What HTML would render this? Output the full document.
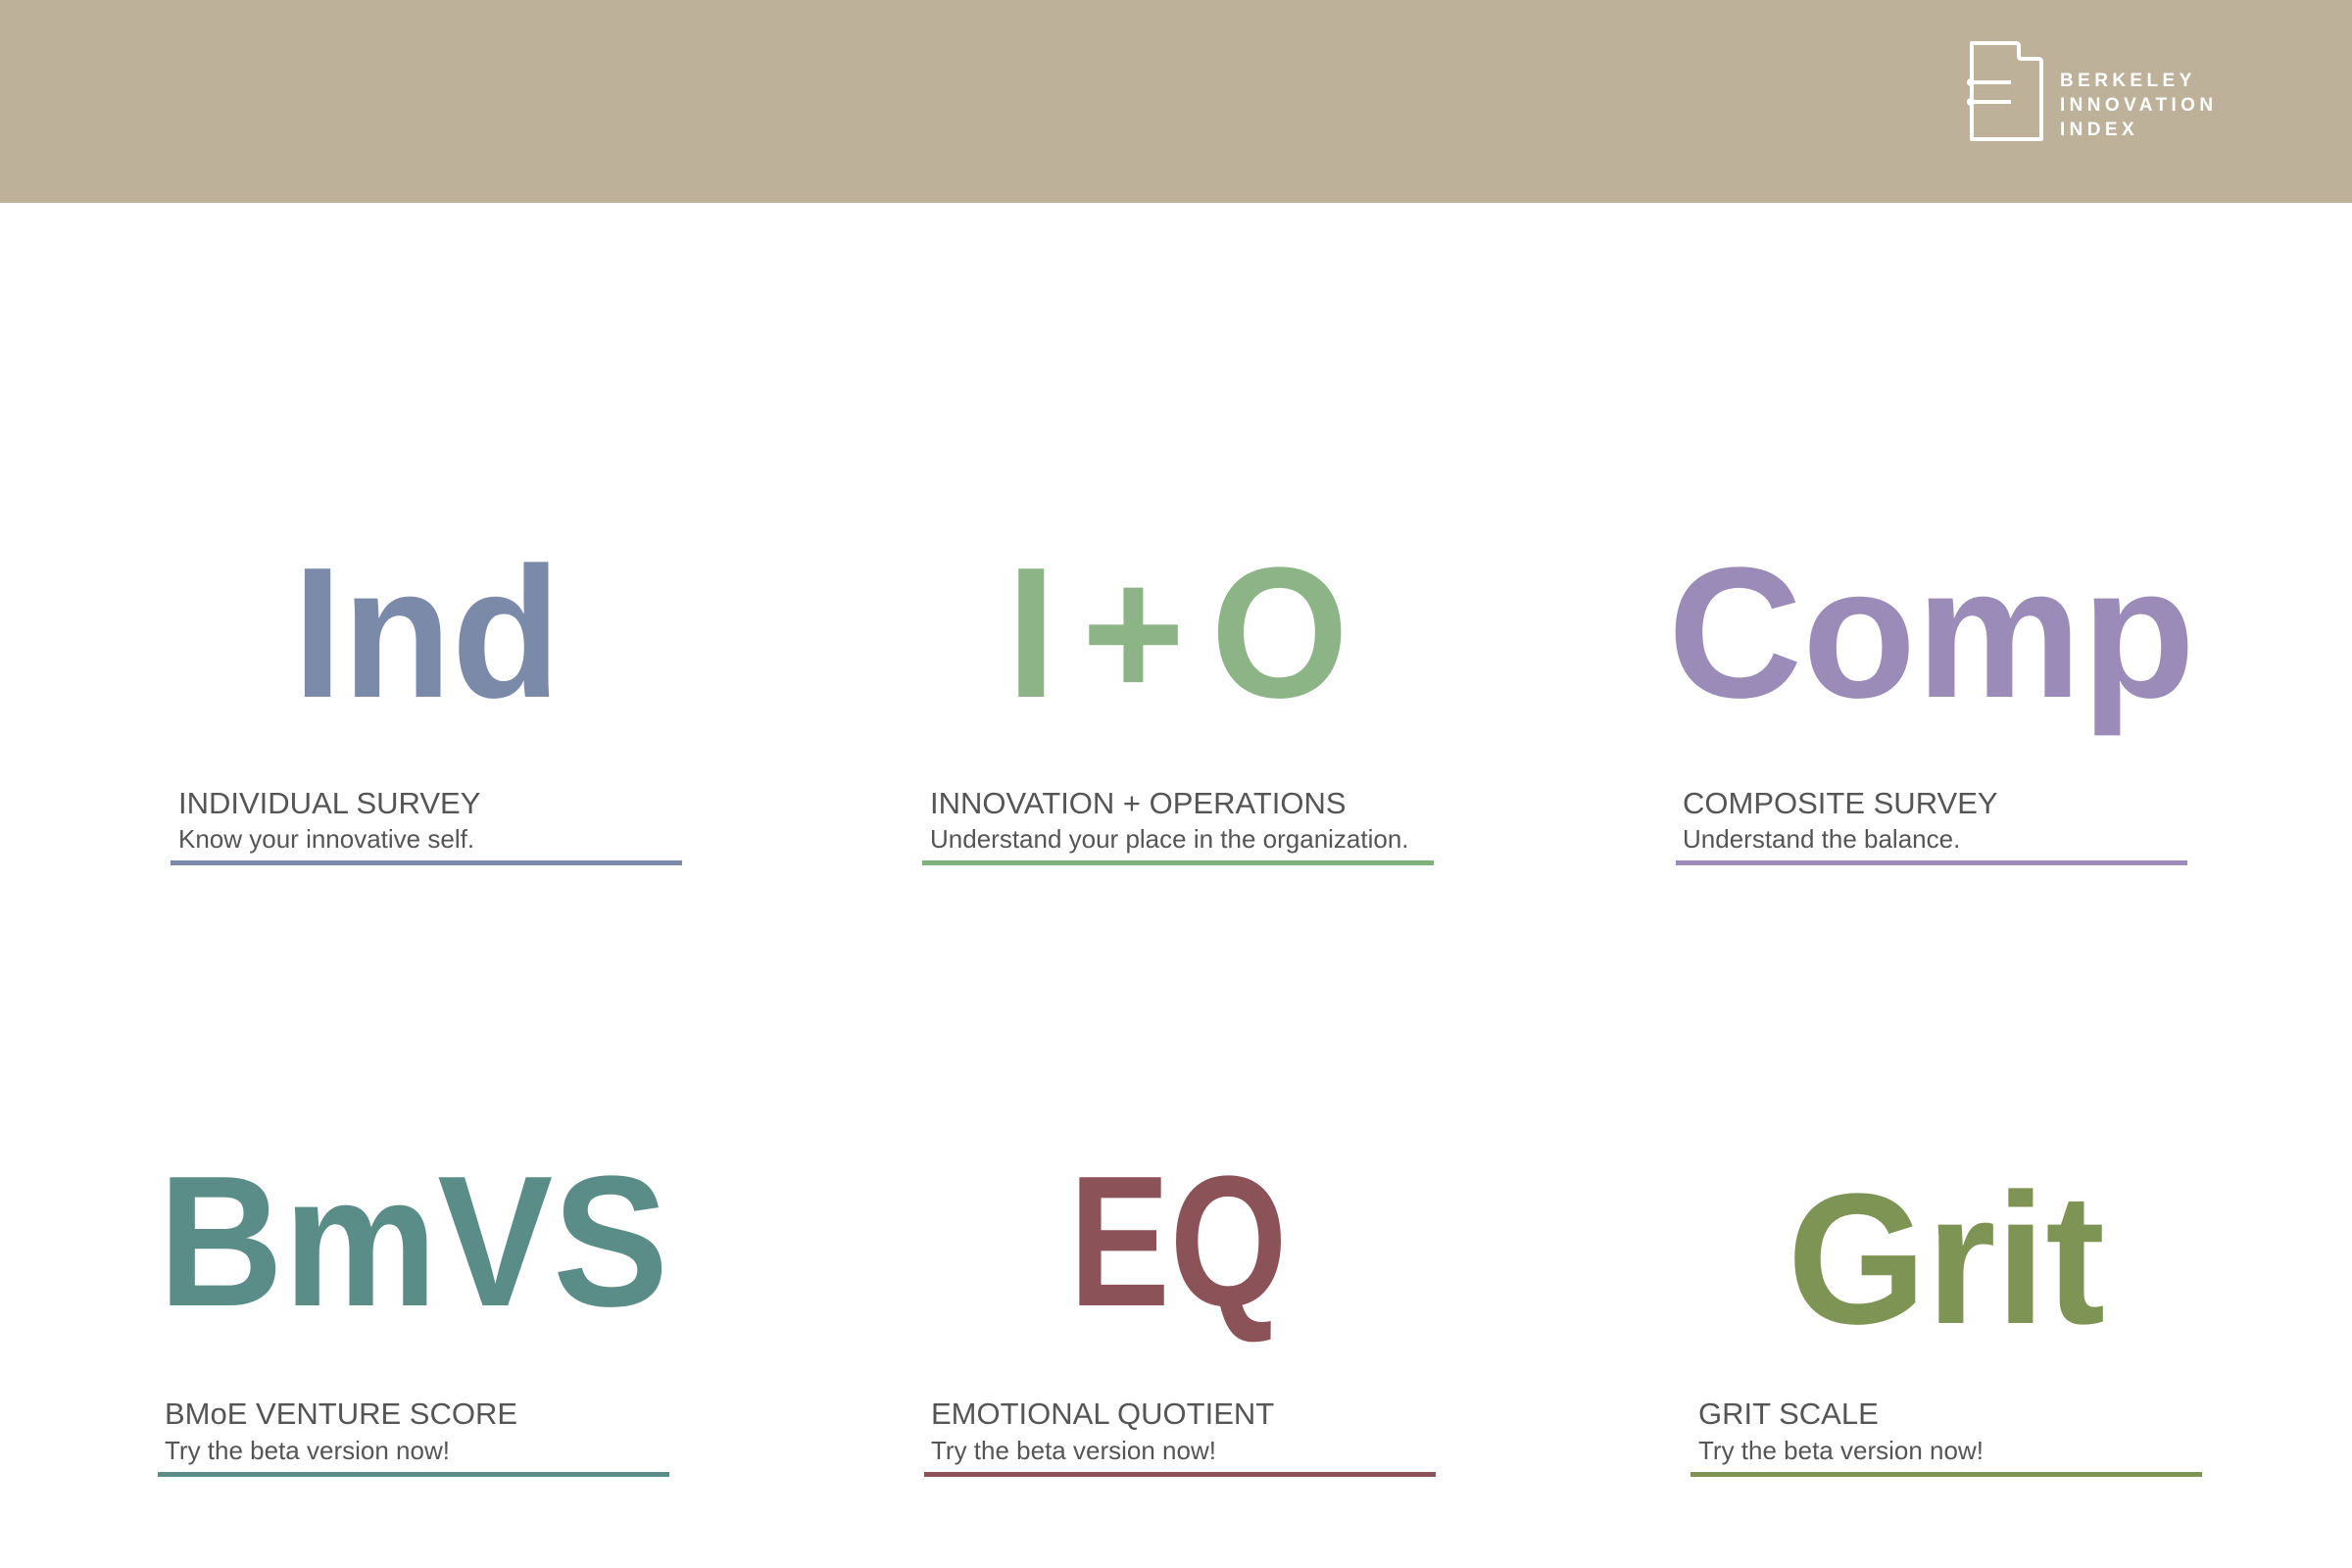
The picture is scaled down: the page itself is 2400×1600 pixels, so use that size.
<!DOCTYPE html>
<html><head><meta charset="utf-8"><style>
*{margin:0;padding:0}
body{width:2400px;height:1600px;background:#fff;position:relative;overflow:hidden;font-family:"Liberation Sans",sans-serif}
.hdr{position:absolute;left:0;top:0;width:2400px;height:207px;background:#bdb19a}
.logo{position:absolute;left:2102px;top:70px;color:#fff;font-weight:bold;font-size:19px;line-height:25px;letter-spacing:4.4px}
.big{position:absolute;width:800px;text-align:center;font-weight:bold;font-size:190px;line-height:190px;white-space:pre}
.big span{display:inline-block}
.h{position:absolute;font-size:31px;line-height:32px;color:#555;white-space:nowrap}
.s{position:absolute;font-size:26px;line-height:25px;color:#555;white-space:nowrap}
.ln{position:absolute;height:5px}
</style></head><body>
<div class="hdr"></div>
<svg style="position:absolute;left:0;top:0" width="2400" height="207">
<g fill="none" stroke="#fff" stroke-width="4" stroke-linejoin="round">
<path d="M2012 44 H2057 Q2060 44 2060 47 V57 Q2060 60 2063 60 H2080 Q2083 60 2083 63 V142 H2012 Z"/>
<path d="M2011 84 H2052 M2011 104 H2052"/>
</g>
<circle cx="2011" cy="84" r="4" fill="#fff"/><circle cx="2011" cy="104" r="4" fill="#fff"/>
</svg>
<div class="logo">BERKELEY<br>INNOVATION<br>INDEX</div>

<div class="big" style="left:35px;top:551px;color:#7b8aa8"><span style="transform:scaleX(.96)">Ind</span></div>
<div class="big" style="left:802px;top:551px;color:#8db486"><span style="transform:scaleX(.95);word-spacing:-25px">I + O</span></div>
<div class="big" style="left:1571px;top:551px;color:#9a8bb8"><span style="transform:scaleX(1)">Comp</span></div>

<div class="big" style="left:22px;top:1172px;color:#5a8d87"><span style="transform:scaleX(.93)">BmVS</span></div>
<div class="big" style="left:802px;top:1172px;color:#8b5257"><span style="transform:scaleX(.81)">EQ</span></div>
<div class="big" style="left:1586px;top:1190px;color:#7d9455"><span style="transform:scaleX(.96)">Grit</span></div>

<div class="h" style="left:182px;top:804px">INDIVIDUAL SURVEY</div>
<div class="s" style="left:182px;top:844px">Know your innovative self.</div>
<div class="ln" style="left:174px;top:878px;width:522px;background:#7b8aa8"></div>

<div class="h" style="left:949px;top:804px">INNOVATION + OPERATIONS</div>
<div class="s" style="left:949px;top:844px">Understand your place in the organization.</div>
<div class="ln" style="left:941px;top:878px;width:522px;background:#7fb27a"></div>

<div class="h" style="left:1717px;top:804px">COMPOSITE SURVEY</div>
<div class="s" style="left:1717px;top:844px">Understand the balance.</div>
<div class="ln" style="left:1710px;top:878px;width:522px;background:#9a8bb8"></div>

<div class="h" style="left:168px;top:1427px">BMoE VENTURE SCORE</div>
<div class="s" style="left:168px;top:1468px">Try the beta version now!</div>
<div class="ln" style="left:161px;top:1502px;width:522px;background:#5a8d87"></div>

<div class="h" style="left:950px;top:1427px">EMOTIONAL QUOTIENT</div>
<div class="s" style="left:950px;top:1468px">Try the beta version now!</div>
<div class="ln" style="left:943px;top:1502px;width:522px;background:#8b5257"></div>

<div class="h" style="left:1733px;top:1427px">GRIT SCALE</div>
<div class="s" style="left:1733px;top:1468px">Try the beta version now!</div>
<div class="ln" style="left:1725px;top:1502px;width:522px;background:#7d9455"></div>
</body></html>
